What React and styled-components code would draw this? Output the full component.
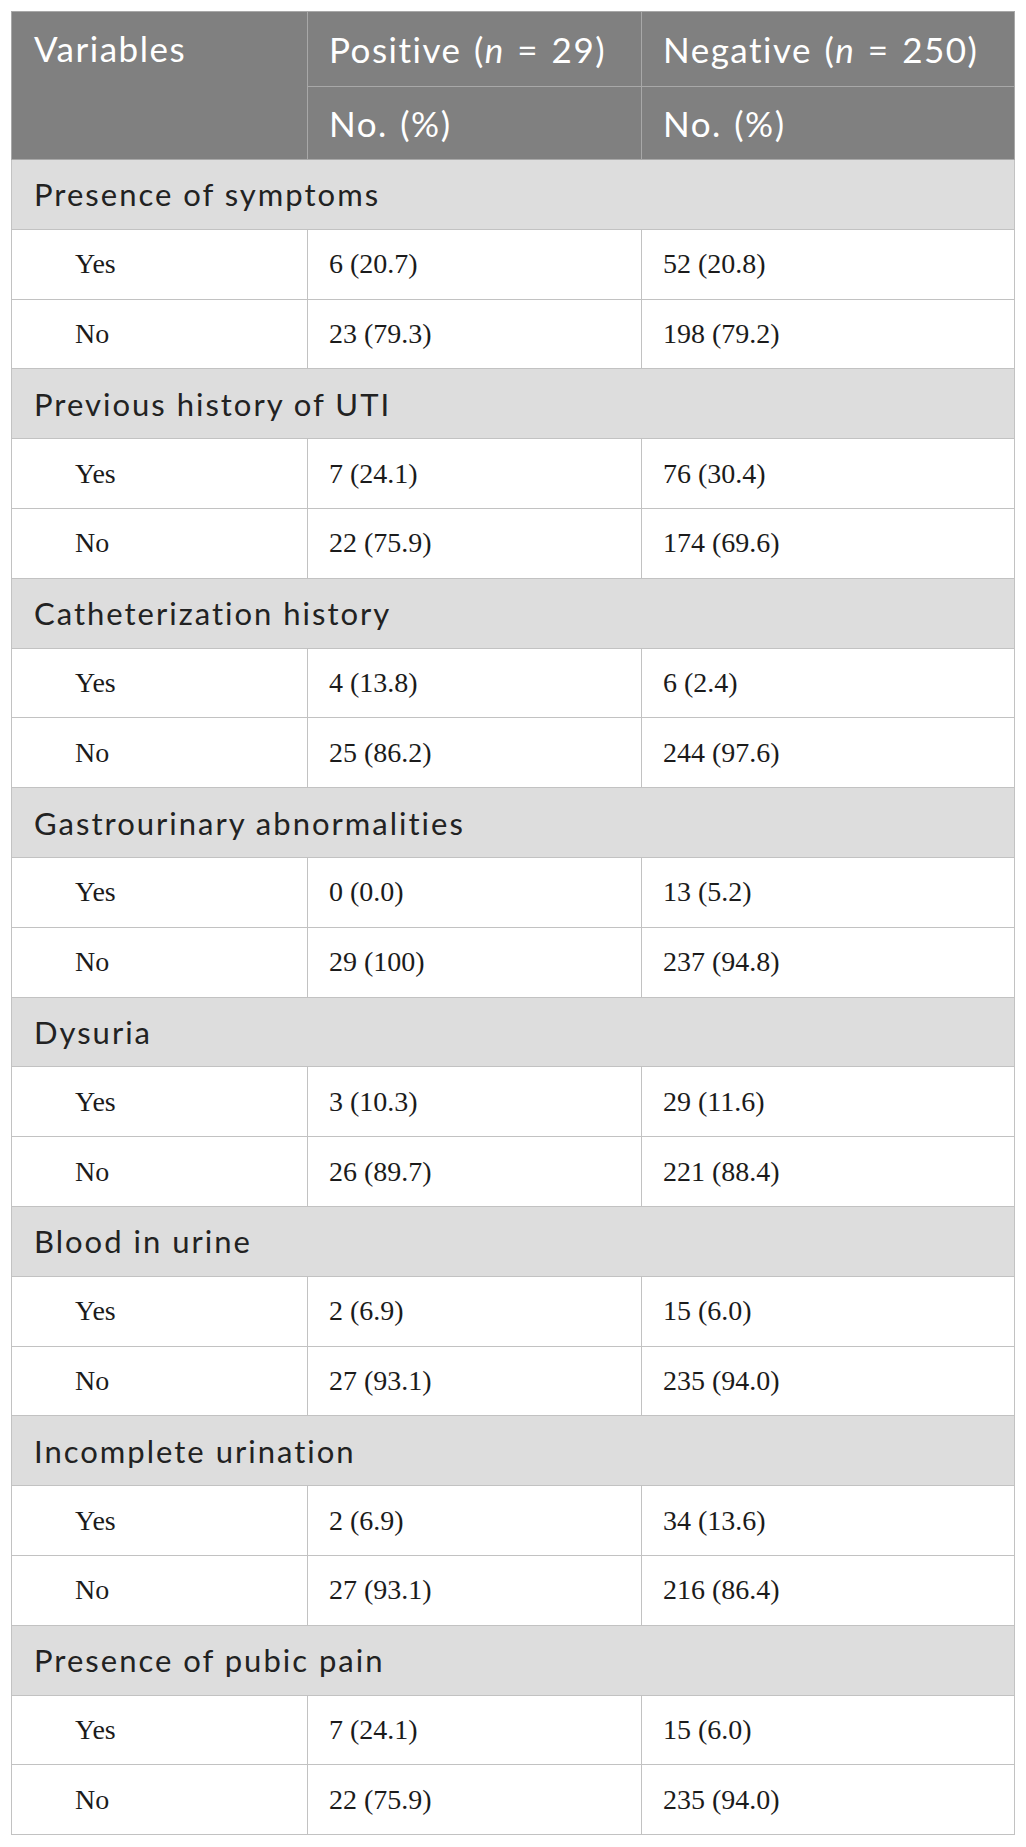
import React from 'react';
import styled, { createGlobalStyle } from 'styled-components';

const GlobalStyle = createGlobalStyle`
  body {
    margin: 0;
    background: #ffffff;
  }
`;

const Page = styled.div`
  padding: 11px 12px 11px 11px;
`;

const Table = styled.table`
  width: 1003px;
  border-collapse: collapse;
  table-layout: fixed;
  border: 1px solid #c2c2c2;
`;

const HeadCell = styled.th`
  background: #808080;
  color: #ffffff;
  font-family: Lato, "Open Sans", sans-serif;
  font-weight: 400;
  font-size: 35px;
  letter-spacing: 1.5px;
  word-spacing: 2px;
  text-align: left;
  vertical-align: ${(p) => (p.$top ? 'top' : 'middle')};
  padding: ${(p) => (p.$top ? '13px 22px 0' : '0 21px')};
  height: ${(p) => p.$h}px;
  border: 1px solid #a8a8a8;
  line-height: 46px;
  white-space: nowrap;
`;

const SectionCell = styled.td`
  background: #dddddd;
  color: #222222;
  font-family: Lato, "Open Sans", sans-serif;
  font-size: 31px;
  letter-spacing: 2px;
  height: 68.8px;
  padding: 0 22px;
  border: 1px solid #c2c2c2;
`;

const DataCell = styled.td`
  color: #1b1b1b;
  font-family: "Liberation Serif", "Times New Roman", serif;
  font-size: 28px;
  height: 68.8px;
  padding: ${(p) => (p.$indent ? '0 0 0 63px' : '0 21px')};
  border: 1px solid #c2c2c2;
`;

const sections = [
  ['Presence of symptoms', ['6 (20.7)', '52 (20.8)'], ['23 (79.3)', '198 (79.2)']],
  ['Previous history of UTI', ['7 (24.1)', '76 (30.4)'], ['22 (75.9)', '174 (69.6)']],
  ['Catheterization history', ['4 (13.8)', '6 (2.4)'], ['25 (86.2)', '244 (97.6)']],
  ['Gastrourinary abnormalities', ['0 (0.0)', '13 (5.2)'], ['29 (100)', '237 (94.8)']],
  ['Dysuria', ['3 (10.3)', '29 (11.6)'], ['26 (89.7)', '221 (88.4)']],
  ['Blood in urine', ['2 (6.9)', '15 (6.0)'], ['27 (93.1)', '235 (94.0)']],
  ['Incomplete urination', ['2 (6.9)', '34 (13.6)'], ['27 (93.1)', '216 (86.4)']],
  ['Presence of pubic pain', ['7 (24.1)', '15 (6.0)'], ['22 (75.9)', '235 (94.0)']],
];

export default function App() {
  return (
    <Page>
      <GlobalStyle />
      <Table>
        <colgroup>
          <col style={{ width: 296 }} />
          <col style={{ width: 334 }} />
          <col style={{ width: 373 }} />
        </colgroup>
        <thead>
          <tr>
            <HeadCell rowSpan={2} $top>Variables</HeadCell>
            <HeadCell $h={74}>Positive (<i>n</i> = 29)</HeadCell>
            <HeadCell $h={74}>Negative (<i>n</i> = 250)</HeadCell>
          </tr>
          <tr>
            <HeadCell $h={72}>No. (%)</HeadCell>
            <HeadCell $h={72}>No. (%)</HeadCell>
          </tr>
        </thead>
        <tbody>
          {sections.map(([title, yes, no]) => (
            <React.Fragment key={title}>
              <tr>
                <SectionCell colSpan={3}>{title}</SectionCell>
              </tr>
              <tr>
                <DataCell $indent>Yes</DataCell>
                <DataCell>{yes[0]}</DataCell>
                <DataCell>{yes[1]}</DataCell>
              </tr>
              <tr>
                <DataCell $indent>No</DataCell>
                <DataCell>{no[0]}</DataCell>
                <DataCell>{no[1]}</DataCell>
              </tr>
            </React.Fragment>
          ))}
        </tbody>
      </Table>
    </Page>
  );
}
